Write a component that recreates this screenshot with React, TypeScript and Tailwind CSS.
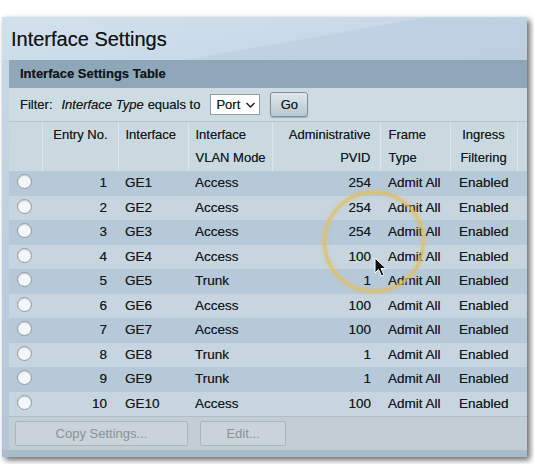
import React from "react";

const rows = [
  [1, "GE1", "Access", 254],
  [2, "GE2", "Access", 254],
  [3, "GE3", "Access", 254],
  [4, "GE4", "Access", 100],
  [5, "GE5", "Trunk", 1],
  [6, "GE6", "Access", 100],
  [7, "GE7", "Access", 100],
  [8, "GE8", "Trunk", 1],
  [9, "GE9", "Trunk", 1],
  [10, "GE10", "Access", 100],
] as const;

function Radio() {
  return (
    <span className="inline-block w-[15px] h-[15px] rounded-full bg-[#f4f6f7] border border-[#8d9aa3] shadow-[inset_0_1px_1px_rgba(0,0,0,0.15)]" />
  );
}

export default function App() {
  return (
    <div
      className="relative w-[534px] h-[464px] overflow-hidden bg-white text-[#14191c] [text-shadow:0_0_0.6px_rgba(0,0,0,0.55)]"
      style={{ fontFamily: '"Liberation Sans", Arial, sans-serif' }}
    >
      <div className="mt-[17px] ml-[2px] w-[525px] h-[440px] flex flex-col bg-gradient-to-b from-[#c9d9e8] to-[#b3c6d6] shadow-[3px_3px_6px_rgba(0,0,0,0.6)] relative">
        <div className="absolute inset-x-0 top-0 h-[43px] bg-[linear-gradient(170deg,#d3e1ec_0%,#c9d9e8_55%,#bfd2e3_56%,#bccfe1_100%)]" />
        <div className="relative h-[43px] flex items-center pl-[9px] text-[20px] text-[#111518] leading-none pt-[1px]">
          Interface Settings
        </div>
        <div className="relative ml-[7px] w-[518px] flex flex-col">
          <div className="h-[28px] flex items-center pl-[11px] bg-[#8ea8b9] text-[13px] font-bold text-[#12171a]">
            Interface Settings Table
          </div>
          <div className="h-[34px] flex items-center pl-[11px] bg-[#cddbe2] text-[13px] border-b border-[#b7c6ce]">
            <span>Filter:</span>
            <span className="ml-[9px] italic">Interface Type</span>
            <span className="ml-[4px]">equals to</span>
            <div className="ml-[10px] w-[50px] h-[21px] bg-white border border-[#8f9ea7] flex items-center pl-[5px] text-[13px]">
              Port
              <svg width="11" height="8" viewBox="0 0 11 8" className="ml-[5px]">
                <path d="M1.5 2 L5.5 6 L9.5 2" fill="none" stroke="#222" strokeWidth="1.5" />
              </svg>
            </div>
            <div className="ml-[10px] w-[38px] h-[25px] rounded-[3px] border border-[#7c8f9b] bg-gradient-to-b from-[#dfe8ed] to-[#b7c7d1] flex items-center justify-center text-[13px] shadow-[0_1px_1px_rgba(0,0,0,0.2)]">
              Go
            </div>
          </div>
          <table className="table-fixed border-collapse w-[518px] text-[13.5px]">
            <colgroup>
              <col className="w-[33px]" />
              <col className="w-[76px]" />
              <col className="w-[70px]" />
              <col className="w-[84px]" />
              <col className="w-[108px]" />
              <col className="w-[70px]" />
              <col className="w-[67px]" />
              <col className="w-[10px]" />
            </colgroup>
            <thead>
              <tr className="h-[49px] bg-[#cad8e0] align-top text-[13px]">
                <th className="font-normal border-r border-[#dde6eb]" />
                <th className="font-normal border-r border-[#dde6eb] text-right pr-[10px] pt-[1px] leading-[23px]">Entry No.</th>
                <th className="font-normal border-r border-[#dde6eb] text-left pl-[7px] pt-[1px] leading-[23px]">Interface</th>
                <th className="font-normal border-r border-[#dde6eb] text-left pl-[7px] pt-[1px] leading-[23px]">Interface<br />VLAN Mode</th>
                <th className="font-normal border-r border-[#dde6eb] text-right pr-[9px] pt-[1px] leading-[23px]">Administrative<br />PVID</th>
                <th className="font-normal border-r border-[#dde6eb] text-left pl-[8px] pt-[1px] leading-[23px]">Frame<br />Type</th>
                <th className="font-normal border-r border-[#dde6eb] text-center pt-[1px] leading-[23px]">Ingress<br />Filtering</th>
                <th className="font-normal" />
              </tr>
            </thead>
            <tbody>
              {rows.map(([n, ge, mode, pvid], i) => (
                <tr
                  key={n}
                  className={
                    "h-[24.5px] " +
                    (i % 2 === 0 ? "bg-[#b6c9d8]" : "bg-[#c6d5df]")
                  }
                >
                  <td className="text-center align-middle pt-[3px] pr-[2px]"><Radio /></td>
                  <td className="text-right pr-[11px]">{n}</td>
                  <td className="pl-[7px]">{ge}</td>
                  <td className="pl-[7px]">{mode}</td>
                  <td className="text-right pr-[9px]">{pvid}</td>
                  <td className="pl-[8px]">Admit All</td>
                  <td className="pl-[9px]">Enabled</td>
                  <td />
                </tr>
              ))}
            </tbody>
          </table>
          <div className="h-[34px] bg-[#c2ced4] flex items-center pl-[6px] gap-[12px] border-t border-[#aebcc4] [text-shadow:none]">
            <div className="w-[173px] h-[25px] border border-[#aab6bc] bg-[#c9d3d8] rounded-[2px] flex items-center justify-center text-[13px] text-[#87929a]">
              Copy Settings...
            </div>
            <div className="w-[86px] h-[25px] border border-[#aab6bc] bg-[#c9d3d8] rounded-[2px] flex items-center justify-center text-[13px] text-[#87929a]">
              Edit...
            </div>
          </div>
        </div>
        <div className="flex-1 bg-[#a9bccb]" />
      </div>
      <div className="absolute left-[323px] top-[191px] w-[102px] h-[102px] rounded-full border-[3px] border-[#e6bd55]/75 shadow-[0_0_4px_rgba(230,189,85,0.6),inset_0_0_4px_rgba(230,189,85,0.5)] pointer-events-none" />
      <svg className="absolute left-[374px] top-[257px]" width="14" height="20" viewBox="0 0 14 20">
        <path d="M1 1 L1 16 L4.5 12.5 L7.5 19 L10 18 L7 11.5 L12 11.5 Z" fill="#111" stroke="#fff" strokeWidth="1" />
      </svg>
    </div>
  );
}
